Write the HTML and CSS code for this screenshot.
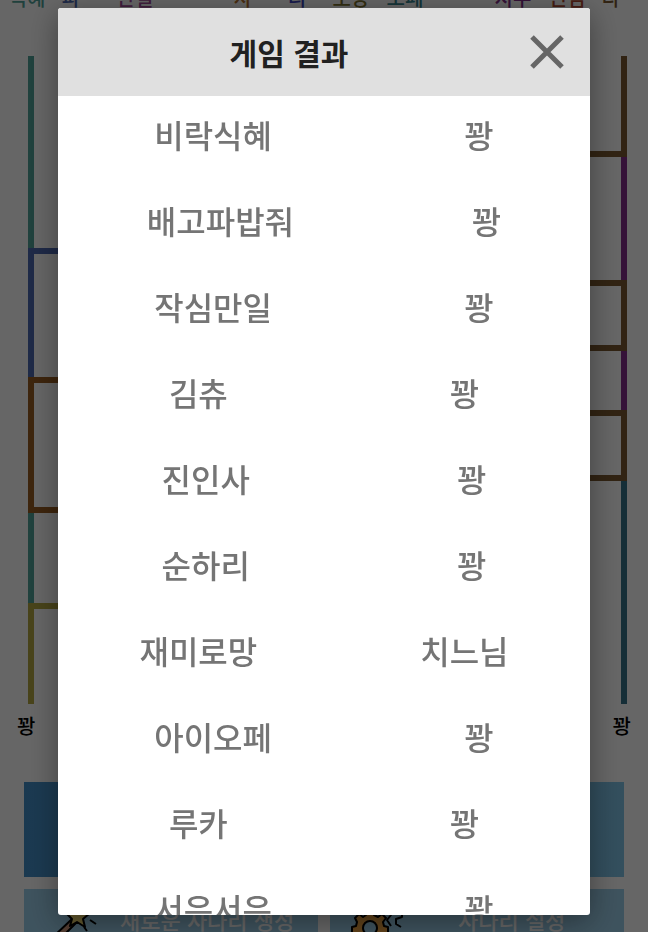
FILE: index.html
```
<!DOCTYPE html>
<html lang="ko">
<head>
    <meta charset="UTF-8">
    <title>사다리 게임</title>
    <meta name="viewport" content="width=device-width, initial-scale=1.0">
    <link rel="stylesheet" href="styles.css">
</head>
<body>
    <main class="game">
        <ul class="players">
            <li class="teal">식혜</li>
            <li class="navy">파…</li>
            <li class="purple">만일</li>
            <li></li>
            <li class="orange">사</li>
            <li class="blue">리</li>
            <li class="olive">로망</li>
            <li class="cyan">오페</li>
            <li></li>
            <li class="violet">지우</li>
            <li class="red">인범</li>
            <li class="brown">다…</li>
        </ul>

        <div class="ladder">
            <svg class="side" viewBox="0 0 60 648" width="60" height="648" fill="none" stroke-width="6">
                <path d="M7 0V192" stroke="#50a398"/>
                <path d="M60 195H7V321" stroke="#4d69b2"/>
                <path d="M7 457V548" stroke="#50a398"/>
                <path d="M60 324H7V454H60" stroke="#9a5d22"/>
                <path d="M60 550H7V648" stroke="#b5a943"/>
            </svg>
            <svg class="side" viewBox="0 0 60 648" width="60" height="648" fill="none" stroke-width="6">
                <path d="M53 100V224M53 295V354" stroke="#842f8c"/>
                <path d="M53 0V98H0M0 227H53V292H0M0 357H53V422H0" stroke="#7b5930"/>
                <path d="M53 425V648" stroke="#367389"/>
            </svg>
        </div>

        <div class="prizes">
            <span>꽝</span>
            <span>꽝</span>
        </div>

        <button class="btn-result" type="button" aria-label="게임 결과"></button>
        <div class="actions">
            <button type="button">
                <svg viewBox="0 0 56 52" width="56" height="52" stroke="#000" stroke-width="2" stroke-linejoin="round">
                    <path d="M24 26L28 30L10 48L5 44Z" fill="#d29a7d"/>
                    <path d="M29 9L33 17L42 20L35 26L37 34L29 29L22 33L24 26L18 20L26 17Z" fill="#f5dc73"/>
                    <path d="M42 27L48 31M36 34L39 38" fill="none"/>
                </svg>
                새로운 사다리 생성
            </button>
            <button type="button">
                <svg viewBox="0 0 88 52" width="88" height="52" stroke="#000" stroke-width="2" stroke-linejoin="round">
                    <path d="M13 18H19L20 22L24 24L28 21L32 25L29 29L30 33L34 34V40L30 41L28 46H4L2 41L-2 40V34L2 33L3 29L1 25L5 21L9 24L12 22Z" fill="#f0a544"/>
                    <circle cx="16" cy="35" r="7" fill="#9ccfea"/>
                    <path d="M37 16V22L33 27L37 33M48 16V24L42 26V31L47 34" fill="none"/>
                </svg>
                사다리 설정
            </button>
        </div>
    </main>

    <div class="overlay">
        <section class="modal" role="dialog" aria-labelledby="modalTitle">
            <header class="modal-header">
                <h1 id="modalTitle">게임 결과</h1>
                <button class="close" type="button" aria-label="닫기">
                    <svg viewBox="0 0 34 34" width="34" height="34" fill="none" stroke="#666" stroke-width="5">
                        <path d="M2 2L32 32M32 2L2 32"/>
                    </svg>
                </button>
            </header>
            <ul class="results">
                <li><span>비락식혜</span><span>꽝</span></li>
                <li><span>배고파밥줘</span><span>꽝</span></li>
                <li><span>작심만일</span><span>꽝</span></li>
                <li><span>김츄</span><span>꽝</span></li>
                <li><span>진인사</span><span>꽝</span></li>
                <li><span>순하리</span><span>꽝</span></li>
                <li><span>재미로망</span><span>치느님</span></li>
                <li><span>아이오페</span><span>꽝</span></li>
                <li><span>루카</span><span>꽝</span></li>
                <li><span>서은서은</span><span>꽝</span></li>
            </ul>
        </section>
    </div>
</body>
</html>
```

FILE: styles.css
```
* {
    box-sizing: border-box;
}

body {
    margin: 0;
    height: 100vh;
    overflow: hidden;
    background: #fff;
    color: #000;
    font-family: "Noto Sans CJK KR", sans-serif;
}

ul {
    margin: 0;
    padding: 0;
    list-style: none;
}

button {
    border: none;
    padding: 0;
    font-family: inherit;
}

/* game board */
.game {
    display: flow-root;
    height: 100vh;
    overflow: hidden;
    padding: 0 24px;
}

.players {
    display: grid;
    grid-template-columns: repeat(12, 1fr);
    height: 24px;
    margin: -14px -24px 0;
    font-size: 20px;
    font-weight: 500;
    line-height: 24px;
    text-align: center;
}

.teal { color: #50a398; }
.navy { color: #4d69b2; }
.purple { color: #a44d9c; }
.orange { color: #b8732d; }
.blue { color: #3c46c0; }
.olive { color: #81752f; }
.cyan { color: #35858f; }
.violet { color: #842f8c; }
.red { color: #b24a32; }
.brown { color: #7b5930; }

.ladder {
    display: flex;
    justify-content: space-between;
    margin: 46px -7px 0 0;
}

.side {
    display: block;
}

.prizes {
    display: flex;
    justify-content: space-between;
    margin: 8px -7px 0;
    font-size: 20px;
    font-weight: 500;
    line-height: 28px;
}

.btn-result {
    display: block;
    width: 100%;
    height: 95px;
    margin-top: 42px;
    background: linear-gradient(90deg, #438fc9, #80c5e9);
}

.actions {
    display: grid;
    grid-template-columns: 1fr 1fr;
    gap: 12px;
    margin-top: 12px;
}

.actions button {
    display: flex;
    align-items: center;
    gap: 16px;
    height: 60px;
    padding-left: 24px;
    background: #9ccfea;
    color: #fff;
    font-size: 22px;
    font-weight: 500;
}

.actions svg {
    overflow: visible;
}

/* result window */
.overlay {
    position: fixed;
    inset: 0;
    padding: 8px 58px 17px;
    background: rgba(0, 0, 0, 0.6);
}

.modal {
    display: flex;
    flex-direction: column;
    height: 100%;
    border-radius: 3px;
    background: #fff;
    box-shadow: 0 6px 30px rgba(0, 0, 0, 0.4);
}

.modal-header {
    display: flex;
    flex: none;
    align-items: center;
    height: 88px;
    padding-right: 26px;
    border-radius: 3px 3px 0 0;
    background: #e0e0e0;
}

.modal-header h1 {
    flex: 1;
    margin: 0;
    padding-right: 10px;
    color: #212121;
    font-size: 30px;
    font-weight: 700;
    text-align: center;
}

.close {
    display: flex;
    background: none;
    cursor: pointer;
}

.results {
    flex: 1;
    min-height: 0;
    overflow: hidden;
    color: #757575;
    font-size: 32px;
    font-weight: 500;
    line-height: 76px;
}

.results li {
    display: flex;
    justify-content: space-around;
    height: 86px;
}
```
